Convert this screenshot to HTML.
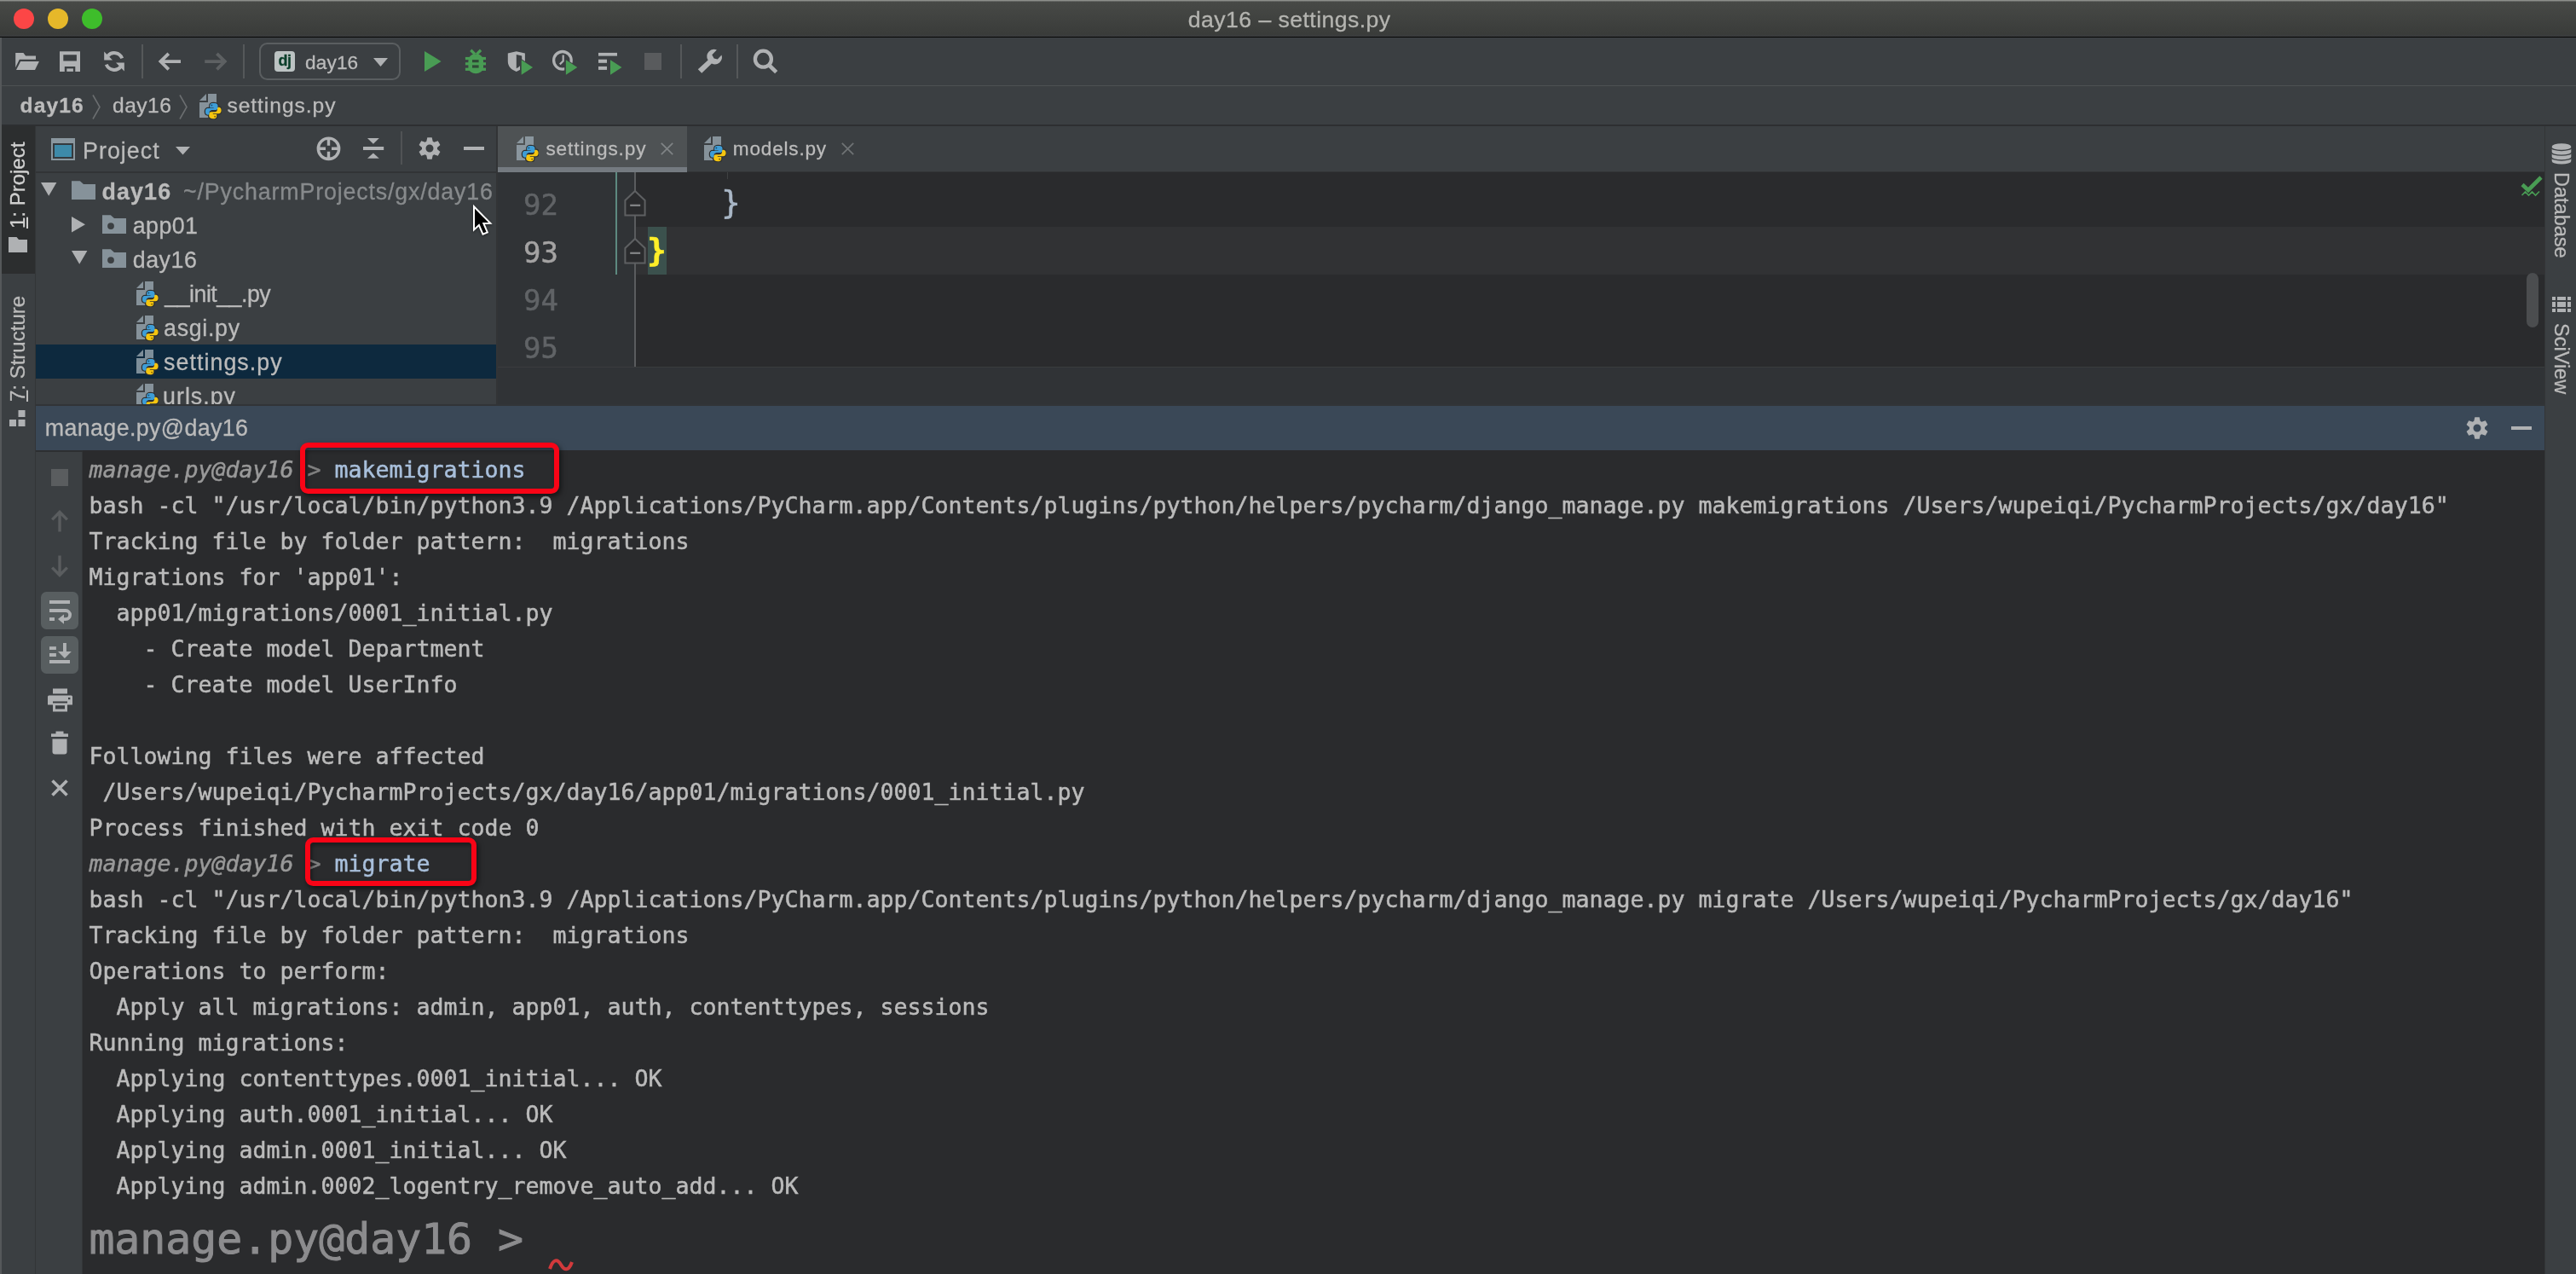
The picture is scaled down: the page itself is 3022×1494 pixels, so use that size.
<!DOCTYPE html>
<html lang="en">
<head>
<meta charset="utf-8">
<title>day16 – settings.py</title>
<style>
*{box-sizing:border-box;margin:0;padding:0}
html,body{width:3022px;height:1494px;overflow:hidden;background:#3b3f42}
body{will-change:transform;position:relative;font-family:"Liberation Sans",sans-serif;font-size:26px;color:#bbbbbb}
.a{position:absolute}
.t{position:absolute;white-space:pre;line-height:30px;height:30px;-webkit-text-stroke:.3px}
.b{font-weight:bold}
.mono{font-family:"DejaVu Sans Mono","Liberation Mono",monospace;-webkit-text-stroke:.5px}
svg{position:absolute;overflow:visible}
.i{position:absolute;width:32px;height:32px}
/* title bar */
#title{left:0;top:0;width:3022px;height:43px;background:linear-gradient(#484a47,#3a3c3a 93%,#3b3d3f)}
#titleline{left:0;top:43px;width:3022px;height:1px;background:#060606}
#tl1,#tl2,#tl3{width:24px;height:24px;border-radius:12px;top:10px}
#tl1{left:16px;background:#fc4646}
#tl2{left:56px;background:#e6b82a}
#tl3{left:96px;background:#3ebd2b}
/* toolbar & nav */
#toolbar{left:0;top:44px;width:3022px;height:56px;background:#3b3f42}
#tbline{left:0;top:100px;width:3022px;height:2px;background:#4d5153}
#nav{left:0;top:101px;width:3022px;height:45px;background:#3b3f42}
#navline{left:0;top:146px;width:3022px;height:2px;background:#2d2f31}
.vsep{position:absolute;width:2px;background:#55585a}
/* left strip */
#lstrip{left:0;top:148px;width:42px;height:1346px;background:#3b3f42}
#lactive{left:0;top:148px;width:42px;height:173px;background:#2c2e2f}
#ledge{left:0;top:44px;width:2px;height:1450px;background:#55585a}
#lborder{left:41px;top:148px;width:1px;height:1346px;background:#333537}
/* right strip */
#rstrip{left:2985px;top:148px;width:37px;height:1346px;background:#3b3f42}
#rborder{left:2985px;top:148px;width:1px;height:1346px;background:#333537}
.vtext{-webkit-text-stroke:.3px;position:absolute;white-space:pre;line-height:30px;height:30px;font-size:25px;color:#bbbbbb;transform-origin:0 0}
/* project panel */
#proj{left:42px;top:148px;width:540px;height:327px;background:#3b3f42}
#projline{left:42px;top:201px;width:540px;height:2px;background:#323436}
#projsep{left:582px;top:148px;width:2px;height:327px;background:#323436}
#sel{left:42px;top:404px;width:540px;height:40px;background:#0d293e}
#tree{left:42px;top:204px;width:540px;height:271px;overflow:hidden}
/* editor */
#tabs{left:584px;top:148px;width:2401px;height:54px;background:#3b3f42}
#tabsel{left:584px;top:148px;width:222px;height:48px;background:#4e5254}
#tabul{left:584px;top:196px;width:222px;height:6px;background:#747a80}
#tabline{left:806px;top:201px;width:2179px;height:1px;background:#323436}
#gutter{left:584px;top:202px;width:161px;height:228px;background:#303336}
#editor{left:745px;top:202px;width:2240px;height:228px;background:#2a2b2d}
#caretrow{left:745px;top:266px;width:2240px;height:56px;background:#313234}
#edbottom{left:584px;top:430px;width:2401px;height:45px;background:#303336}
#edbline{left:584px;top:430px;width:2401px;height:1px;background:#3a3c3e}
.ln{position:absolute;left:614px;font-size:33.9px;line-height:56px;height:56px;color:#606366;white-space:pre}
.code{position:absolute;font-size:33.9px;line-height:56px;height:56px;white-space:pre;color:#a9b7c6}
/* bottom panel */
#bhead{left:42px;top:476px;width:2943px;height:52px;background:#3a4857}
#btool{left:42px;top:528px;width:55px;height:966px;background:#3b3f42}
#btoolline{left:96px;top:528px;width:1px;height:966px;background:#333537}
#console{left:97px;top:528px;width:2888px;height:966px;background:#2a2b2d;overflow:hidden}
.cl{position:absolute;left:7.4px;height:42px;line-height:42px;font-size:26.58px;white-space:pre;color:#bbbbbb}
.pr{color:#999999;font-style:italic}
.gt{color:#808080}
.cmd{color:#a8bfdb}
.redbox{position:absolute;border:6.3px solid #f90416;border-radius:9.5px;box-shadow:2px 3px 6px rgba(0,0,0,.55),inset 2px 3px 5px rgba(0,0,0,.4)}
.tbtn{position:absolute;left:48px;width:44px;height:44px;border-radius:6.5px;background:#585e60}
</style>
</head>
<body>
<svg width="0" height="0" style="left:0;top:0">
<defs>
<symbol id="py" viewBox="0 0 16 16">
<path d="M7,1 L3,5 L7,5 Z" fill="#9AA7B0" fill-opacity=".8"/>
<path d="M8,1 L8,6 L3,6 L3,15 L13,15 L13,1 Z" fill="#9AA7B0" fill-opacity=".8"/>
<g transform="translate(6.3,6.2)">
<g id="pylogo">
<path id="pyb" d="M4.9,0.3 C3.2,0.3 2.9,1.0 2.9,1.9 V2.9 H5.1 V3.3 H1.8 C0.8,3.3 0.2,4.0 0.2,5.2 C0.2,6.4 0.8,7.0 1.6,7.0 H2.5 V5.8 C2.5,4.9 3.2,4.3 4.0,4.3 H6.2 C6.9,4.3 7.4,3.8 7.4,3.1 V1.9 C7.4,0.9 6.5,0.3 4.9,0.3 Z" fill="#3e9dd6" stroke="#2d3032" stroke-width="1.3" paint-order="stroke"/>
<path d="M4.9,0.3 C3.2,0.3 2.9,1.0 2.9,1.9 V2.9 H5.1 V3.3 H1.8 C0.8,3.3 0.2,4.0 0.2,5.2 C0.2,6.4 0.8,7.0 1.6,7.0 H2.5 V5.8 C2.5,4.9 3.2,4.3 4.0,4.3 H6.2 C6.9,4.3 7.4,3.8 7.4,3.1 V1.9 C7.4,0.9 6.5,0.3 4.9,0.3 Z" transform="rotate(180 4.85 4.85)" fill="#f5c50f" stroke="#2d3032" stroke-width="1.3" paint-order="stroke"/>
<path d="M4.9,0.3 C3.2,0.3 2.9,1.0 2.9,1.9 V2.9 H5.1 V3.3 H1.8 C0.8,3.3 0.2,4.0 0.2,5.2 C0.2,6.4 0.8,7.0 1.6,7.0 H2.5 V5.8 C2.5,4.9 3.2,4.3 4.0,4.3 H6.2 C6.9,4.3 7.4,3.8 7.4,3.1 V1.9 C7.4,0.9 6.5,0.3 4.9,0.3 Z" fill="#3e9dd6"/>
<circle cx="3.9" cy="1.55" r=".45" fill="#1d4f75"/>
<circle cx="5.8" cy="8.15" r=".45" fill="#7a5c00"/>
</g>
</g>
</symbol>
<symbol id="folder" viewBox="0 0 16 16">
<path d="M1,2.1 H5.9 L8,4 H15 V13 H1 Z" fill="#9AA7B0" fill-opacity=".8"/>
</symbol>
<symbol id="mfolder" viewBox="0 0 16 16">
<path d="M1,2.1 H5.9 L8,4 H15 V13 H1 Z M6,6.6 A1.95,1.95 0 1 0 6,10.5 A1.95,1.95 0 1 0 6,6.6 Z" fill="#9AA7B0" fill-opacity=".8" fill-rule="evenodd"/>
</symbol>
<symbol id="gear" viewBox="0 0 30 30"><path fill="#afb1b3" fill-rule="evenodd" d="M11.30,6.80 L12.30,2.20 L17.70,2.20 L18.70,6.80 A9.0,9.0 0 0 1 20.26,7.69 L24.74,6.26 L27.44,10.94 L23.96,14.10 A9.0,9.0 0 0 1 23.96,15.90 L27.44,19.06 L24.74,23.74 L20.26,22.31 A9.0,9.0 0 0 1 18.70,23.20 L17.70,27.80 L12.30,27.80 L11.30,23.20 A9.0,9.0 0 0 1 9.74,22.31 L5.26,23.74 L2.56,19.06 L6.04,15.90 A9.0,9.0 0 0 1 6.04,14.10 L2.56,10.94 L5.26,6.26 L9.74,7.69 A9.0,9.0 0 0 1 11.30,6.80 Z M10.50,15.00 A4.5,4.5 0 1 0 19.50,15.00 A4.5,4.5 0 1 0 10.50,15.00 Z"/></symbol>
<symbol id="play" viewBox="0 0 16 16">
<path d="M0,0 L9.8,6 L0,12 Z" fill="#499c54"/>
</symbol>
</defs>
</svg>
<!-- TITLE BAR -->
<div class="a" id="title"></div>
<div class="a" style="left:0;top:0;width:3022px;height:1px;background:#8d8f8b"></div><div class="a" style="left:0;top:1px;width:3022px;height:1px;background:#676966"></div>
<div class="a" id="titleline"></div>
<div class="a" id="tl1"></div><div class="a" id="tl2"></div><div class="a" id="tl3"></div>
<div class="t" id="titletext" style="left:1393.80px;top:7.58px;font-size:26.60px;letter-spacing:0.456px;color:#b4b4b0">day16 – settings.py</div>

<!-- TOOLBAR -->
<div class="a" id="toolbar"></div>
<div class="a" id="tbline"></div>
<div class="a" id="nav"></div>
<div class="a" id="navline"></div>
<!-- open -->
<svg class="i" style="left:16px;top:56px" viewBox="0 0 16 16"><path fill="#afb1b3" d="M1.1,3.05 H5.7 L7.05,4.8 H13 V6.85 H3.4 L1.1,11.6 Z"/><path fill="#afb1b3" d="M4.05,8.05 H14.95 L12.5,12.95 H1.5 Z"/></svg>
<!-- save -->
<svg class="i" style="left:66px;top:56px" viewBox="0 0 16 16"><path fill="#afb1b3" fill-rule="evenodd" d="M2,2.1 H14 V13.95 H2 Z M4.15,4.15 V7.7 H11.95 V4.15 Z M4.9,10.95 V13.95 H11.15 V10.95 Z"/><rect x="6.15" y="12.2" width="3.8" height="1.75" fill="#afb1b3"/></svg>
<!-- refresh -->
<svg class="i" style="left:118px;top:56px" viewBox="0 0 16 16"><g fill="none" stroke="#afb1b3" stroke-width="2"><path d="M12.6,6.2 A4.9,4.9 0 0 0 4.2,4.9"/><path d="M3.4,9.8 A4.9,4.9 0 0 0 11.8,11.1"/></g><path fill="#afb1b3" d="M2.1,2.3 V7.2 H7 Z"/><path fill="#afb1b3" d="M13.9,13.7 V8.8 H9 Z"/></svg>
<div class="vsep" style="left:166px;top:52px;height:40px"></div>
<!-- back -->
<svg class="i" style="left:182px;top:56px" viewBox="0 0 16 16"><path fill="none" stroke="#afb1b3" stroke-width="1.9" d="M15,8.05 H3.2 M7.9,3.4 L3.2,8.05 L7.9,12.7"/></svg>
<!-- forward -->
<svg class="i" style="left:236px;top:56px" viewBox="0 0 16 16"><path fill="none" stroke="#5d6062" stroke-width="1.9" d="M2.1,8.05 H13.9 M9.2,3.4 L13.9,8.05 L9.2,12.7"/></svg>
<div class="vsep" style="left:285px;top:52px;height:40px"></div>
<!-- run config -->
<div class="a" style="left:304px;top:50px;width:166px;height:44px;border:2px solid #5a5e60;border-radius:9.5px"></div>
<div class="a" style="left:322px;top:60px;width:24px;height:24px;border-radius:4px;background:#bcc3c3"></div>
<div class="t b" style="left:326.5px;top:56px;font-size:18px;color:#0b3f2b;letter-spacing:-.5px">dj</div>
<div class="t" id="rc" style="left:358.10px;top:58.77px;font-size:22.60px;letter-spacing:0.125px">day16</div>
<svg style="left:438px;top:68px" width="17" height="10" viewBox="0 0 17 10"><path d="M0,0 H17 L8.5,10 Z" fill="#afb1b3"/></svg>
<!-- run -->
<svg style="left:498px;top:60px" width="20" height="24" viewBox="0 0 20 24"><path d="M0,0 L19.6,12 L0,24 Z" fill="#499c54"/></svg>
<!-- debug -->
<svg style="left:545px;top:58px" width="26" height="29" viewBox="0 0 26 29"><g fill="#499c54"><path d="M4.4,14 C4.4,8.5 8,5.3 13.2,5.3 C18.4,5.3 22,8.5 22,14 V21 C22,25.5 17.5,28.2 13.2,28.2 C8.9,28.2 4.4,25.5 4.4,21 Z"/><rect x="0.9" y="8.9" width="24.1" height="3.2"/><rect x="0.9" y="15.2" width="24.1" height="3.2"/><rect x="0.9" y="21.6" width="24.1" height="3.3"/></g><path d="M7.3,0.8 L12.2,5.6 M19.1,0.8 L14.2,5.6" stroke="#499c54" stroke-width="3.3" fill="none"/><rect x="9" y="12.1" width="7.6" height="3.1" fill="#2f4a36"/><rect x="9" y="18.4" width="7.6" height="3.2" fill="#2f4a36"/></svg>
<!-- coverage -->
<svg style="left:595px;top:60px" width="32" height="28" viewBox="0 0 32 28"><path fill="#afb1b3" fill-rule="evenodd" d="M0.8,2.6 L10.8,0.2 L20.9,2.6 V12 C20.9,18 16.5,22 10.8,23.9 C5.2,22 0.8,18 0.8,12 Z M10.8,4 V20.2 C14.5,18.6 17.2,15.6 17.2,12 V5.5 Z"/><path d="M15,8 L31.5,19 L15,30 Z" fill="#3b3f42"/><path d="M16.7,10.3 L30.1,19 L16.7,27.7 Z" fill="#499c54"/></svg>
<!-- profile -->
<svg style="left:647px;top:58px" width="32" height="30" viewBox="0 0 32 30"><circle cx="12.9" cy="12.8" r="10.3" fill="none" stroke="#afb1b3" stroke-width="3.3"/><path d="M13.7,6.5 V13.5 L9.8,17.4" fill="none" stroke="#afb1b3" stroke-width="2.2"/><path d="M15.2,10 L31.7,21 L15.2,32 Z" fill="#3b3f42"/><path d="M16.9,12.3 L30.3,21 L16.9,29.7 Z" fill="#499c54"/></svg>
<!-- run list -->
<svg style="left:702px;top:60px" width="30" height="28" viewBox="0 0 30 28"><g fill="#afb1b3"><rect x="0" y="1.9" width="22" height="3.7"/><rect x="0" y="9.7" width="10" height="4.1"/><rect x="0" y="17.9" width="10" height="4"/></g><path d="M14,10.3 L27.5,19 L14,27.7 Z" fill="#499c54"/></svg>
<!-- stop -->
<div class="a" style="left:756px;top:62px;width:20px;height:20px;background:#595b5d"></div>
<div class="vsep" style="left:798px;top:52px;height:40px"></div>
<!-- wrench -->
<svg style="left:818px;top:56px" width="32" height="32" viewBox="0 0 32 32"><path fill="#afb1b3" d="M0.8,25.2 L12.6,14.6 A8.3,8.3 0 0 1 22.9,2.6 L17.3,8.2 L19.6,12.4 L23.8,13.6 L28.5,8.6 A8.3,8.3 0 0 1 16.9,18.6 L5.2,29.8 Z"/></svg>
<div class="vsep" style="left:864px;top:52px;height:40px"></div>
<!-- search -->
<svg style="left:882px;top:56px" width="32" height="32" viewBox="0 0 32 32"><circle cx="13.4" cy="13.2" r="9.5" fill="none" stroke="#afb1b3" stroke-width="4.3"/><path d="M19.8,20 L28.7,28.6" stroke="#afb1b3" stroke-width="4.6" fill="none"/></svg>

<!-- NAV -->
<div class="t b" id="nv1" style="left:23.60px;top:108.78px;font-size:24.60px;letter-spacing:1.075px">day16</div>
<svg style="left:108px;top:111px" width="10" height="29" viewBox="0 0 10 29"><path d="M1,0.5 L9,14.5 L1,28.5" fill="none" stroke="#6b6e70" stroke-width="1.6"/></svg>
<div class="t" id="nv2" style="left:132.10px;top:108.78px;font-size:24.60px;letter-spacing:0.450px">day16</div>
<svg style="left:210px;top:111px" width="10" height="29" viewBox="0 0 10 29"><path d="M1,0.5 L9,14.5 L1,28.5" fill="none" stroke="#6b6e70" stroke-width="1.6"/></svg>
<svg class="i" style="left:228px;top:108px"><use href="#py"/></svg>
<div class="t" id="nv3" style="left:266.40px;top:108.78px;font-size:24.60px;letter-spacing:0.960px">settings.py</div>
<!-- LEFT STRIP -->
<div class="a" id="lstrip"></div>
<div class="a" id="lactive"></div>
<div class="a" id="lborder"></div>
<div class="vtext" id="vt1" style="left:6px;top:268px;font-size:24px;transform:rotate(-90deg);color:#d0d0d0"><u>1</u>: Project</div>
<svg style="left:10px;top:278px" width="22" height="18" viewBox="0 0 22 18"><path d="M0,0 H9.5 L12,3 H22 V18 H0 Z" fill="#afb1b3"/></svg>
<div class="vtext" id="vt2" style="left:6px;top:471px;font-size:24px;transform:rotate(-90deg)"><u>7</u>: Structure</div>
<svg style="left:11px;top:481px" width="20" height="20" viewBox="0 0 20 20"><g fill="#afb1b3"><rect x="10.5" y="0" width="8" height="8"/><rect x="0" y="11" width="8" height="8"/><rect x="10.5" y="11" width="8" height="8"/></g></svg>

<!-- RIGHT STRIP -->
<div class="a" id="rstrip"></div>
<div class="a" id="rborder"></div>
<svg style="left:2993px;top:168px" width="24" height="25" viewBox="0 0 24 25"><path d="M0.7,3.9 V21 A11.3,3.6 0 0 0 23.3,21 V3.9 A11.3,3.6 0 0 0 0.7,3.9 Z" fill="#afb1b3"/><g fill="none" stroke="#3b3f42" stroke-width="1.4"><path d="M0,4.7 A11.8,3.7 0 0 0 24,4.7"/><path d="M0,10.4 A11.8,3.7 0 0 0 24,10.4"/><path d="M0,16.2 A11.8,3.7 0 0 0 24,16.2"/></g></svg>
<div class="vtext" id="vt3" style="left:3020px;top:202px;font-size:23.5px;transform:rotate(90deg)">Database</div>
<svg style="left:2994px;top:348px" width="22" height="18" viewBox="0 0 22 18"><g fill="#afb1b3"><rect x="0" y="0" width="4" height="4"/><rect x="6" y="0" width="10" height="4"/><rect x="18" y="0" width="4" height="4"/><rect x="0" y="6" width="4" height="6"/><rect x="6" y="6" width="10" height="6"/><rect x="18" y="6" width="4" height="6"/><rect x="0" y="14" width="4" height="4"/><rect x="6" y="14" width="10" height="4"/><rect x="18" y="14" width="4" height="4"/></g></svg>
<div class="vtext" id="vt4" style="left:3020px;top:379px;font-size:23.5px;transform:rotate(90deg)">SciView</div>

<!-- PROJECT PANEL -->
<div class="a" id="proj"></div>
<div class="a" id="sel"></div>
<div class="a" id="projline"></div>
<div class="a" id="projsep"></div>
<!-- header -->
<svg style="left:60px;top:162px" width="28" height="26" viewBox="0 0 28 26"><rect width="28" height="26" fill="#8a979f"/><rect x="2" y="6" width="24" height="18" fill="#343a3e"/><rect x="4" y="8" width="20" height="14" fill="#3d8aa9"/></svg>
<div class="t" id="ph" style="left:97.10px;top:161.51px;font-size:26.80px;letter-spacing:1.017px">Project</div>
<svg style="left:206px;top:172px" width="17" height="10" viewBox="0 0 17 10"><path d="M0,0 H17 L8.5,9.6 Z" fill="#afb1b3"/></svg>
<svg style="left:371px;top:160px" width="29" height="29" viewBox="0 0 29 29"><circle cx="14.5" cy="14.3" r="12.2" fill="none" stroke="#afb1b3" stroke-width="3.4"/><path d="M14.5,2 V10.8 M14.5,17.8 V26.8 M2,14.3 H11 M18,14.3 H27" stroke="#afb1b3" stroke-width="3.4" fill="none"/></svg>
<svg style="left:426px;top:161px" width="25" height="26" viewBox="0 0 25 26"><g fill="#afb1b3"><rect x="0" y="11" width="24.2" height="4"/><path d="M5,1 H18.8 L11.9,7.8 Z"/><path d="M5,24.7 H18.8 L11.9,18.5 Z"/></g></svg>
<div class="vsep" style="left:470px;top:154px;height:39px;background:#505355"></div>
<svg style="left:489px;top:159px" width="30" height="30"><use href="#gear"/></svg>
<div class="a" style="left:544px;top:172px;width:24px;height:4px;background:#afb1b3"></div>
<!-- tree -->
<div class="a" id="tree">
<svg style="left:6px;top:10px" width="19" height="16" viewBox="0 0 19 16"><path d="M0,0 H18.4 L9.2,15.8 Z" fill="#afb1b3"/></svg>
<svg class="i" style="left:40px;top:4px"><use href="#folder"/></svg>
<div class="t b" id="tr0" style="left:77.50px;top:5.71px;font-size:26.80px;letter-spacing:1.150px">day16</div>
<div class="t" id="tr0b" style="left:173.00px;top:5.71px;font-size:26.80px;letter-spacing:0.848px;color:#878a8c">~/PycharmProjects/gx/day16</div>

<svg style="left:42px;top:50px" width="16" height="19" viewBox="0 0 16 19"><path d="M0,0 L16,9.2 L0,18.4 Z" fill="#afb1b3"/></svg>
<svg class="i" style="left:76px;top:44px"><use href="#mfolder"/></svg>
<div class="t" id="tr1" style="left:113.80px;top:45.71px;font-size:26.80px;letter-spacing:0.400px">app01</div>

<svg style="left:42px;top:90px" width="19" height="16" viewBox="0 0 19 16"><path d="M0,0 H18.4 L9.2,15.8 Z" fill="#afb1b3"/></svg>
<svg class="i" style="left:76px;top:84px"><use href="#mfolder"/></svg>
<div class="t" id="tr2" style="left:113.80px;top:85.71px;font-size:26.80px;letter-spacing:0.500px">day16</div>

<svg class="i" style="left:112px;top:124px"><use href="#py"/></svg>
<div class="t" id="tr3" style="left:151.30px;top:125.71px;font-size:26.80px;letter-spacing:-0.520px">__init__.py</div>
<svg class="i" style="left:112px;top:164px"><use href="#py"/></svg>
<div class="t" id="tr4" style="left:150.10px;top:165.71px;font-size:26.80px;letter-spacing:0.683px">asgi.py</div>
<svg class="i" style="left:112px;top:204px"><use href="#py"/></svg>
<div class="t" id="tr5" style="left:150.10px;top:205.71px;font-size:26.80px;letter-spacing:1.040px">settings.py</div>
<svg class="i" style="left:112px;top:244px"><use href="#py"/></svg>
<div class="t" id="tr6" style="left:149.10px;top:245.71px;font-size:26.80px;letter-spacing:0.983px">urls.py</div>
</div>
<!-- EDITOR -->
<div class="a" id="tabs"></div>
<div class="a" id="tabsel"></div>
<div class="a" id="tabul"></div>
<div class="a" id="tabline"></div>
<svg class="i" style="left:600px;top:158px"><use href="#py"/></svg>
<div class="t" id="tb1" style="left:640.40px;top:160.17px;font-size:22.60px;letter-spacing:0.920px">settings.py</div>
<svg style="left:775px;top:167px" width="15" height="15" viewBox="0 0 15 15"><path d="M0.8,0.8 L14.2,14.2 M14.2,0.8 L0.8,14.2" stroke="#7f8385" stroke-width="1.8" fill="none"/></svg>
<svg class="i" style="left:820px;top:158px"><use href="#py"/></svg>
<div class="t" id="tb2" style="left:859.80px;top:160.17px;font-size:22.60px;letter-spacing:0.800px">models.py</div>
<svg style="left:987px;top:167px" width="15" height="15" viewBox="0 0 15 15"><path d="M0.8,0.8 L14.2,14.2 M14.2,0.8 L0.8,14.2" stroke="#6e7274" stroke-width="1.8" fill="none"/></svg>

<div class="a" id="gutter"></div>
<div class="a" id="editor"></div>
<div class="a" id="caretrow"></div>
<div class="a" style="left:853px;top:202px;width:1px;height:8px;background:#3f4142"></div>
<div class="a" style="left:722px;top:202px;width:2px;height:120px;background:#5d8a80"></div>
<div class="a" style="left:744px;top:202px;width:2px;height:228px;background:#5a5c5e"></div>
<div class="ln mono" id="ln92" style="top:212.5px">92</div>
<div class="ln mono" id="ln93" style="top:268.5px;color:#a4a3a3">93</div>
<div class="ln mono" id="ln94" style="top:324.5px">94</div>
<div class="a" style="left:584px;top:378px;width:161px;height:52px;overflow:hidden"><div class="ln mono" id="ln95" style="left:30px;top:2.5px">95</div></div>
<svg style="left:732px;top:222px" width="26" height="32" viewBox="0 0 26 32"><path d="M13,2 L24.6,13 V30.6 H1.4 V13 Z" fill="#2a2b2d" stroke="#5e6062" stroke-width="2"/><path d="M7.2,18.8 H19.2" stroke="#858789" stroke-width="2.2"/></svg>
<svg style="left:732px;top:278px" width="26" height="32" viewBox="0 0 26 32"><path d="M13,2 L24.6,13 V30.6 H1.4 V13 Z" fill="#2a2b2d" stroke="#5e6062" stroke-width="2"/><path d="M7.2,18.8 H19.2" stroke="#858789" stroke-width="2.2"/></svg>
<div class="a" style="left:760px;top:266px;width:22px;height:56px;background:#3b514d"></div>
<div class="code mono" id="br92" style="left:846px;top:209px;font-size:38px">}</div>
<div class="code mono b" id="br93" style="left:759px;top:265px;font-size:38px;color:#ffef28">}</div>
<div class="a" id="edbottom"></div>
<div class="a" id="edbline"></div>
<!-- inspection ok -->
<svg style="left:2957px;top:205px" width="26" height="26" viewBox="0 0 26 26"><path d="M2,11.5 L9,18 L24,3" fill="none" stroke="#499c54" stroke-width="4.6"/><path d="M1.5,24 L5.5,20 L9.5,24 L13.5,20 L17.5,24 L22,19.5" fill="none" stroke="#499c54" stroke-width="1.7"/></svg>
<!-- scrollbar -->
<div class="a" style="left:2964px;top:320px;width:14px;height:64px;border-radius:7px;background:#4b4d4f"></div>
<!-- BOTTOM PANEL -->
<div class="a" style="left:42px;top:474px;width:2943px;height:2px;background:#313437"></div>
<div class="a" id="bhead"></div>
<div class="t" id="bh" style="left:52.80px;top:487.01px;font-size:26.80px;letter-spacing:0.386px">manage.py@day16</div>
<svg style="left:2891px;top:487px" width="30" height="30"><use href="#gear"/></svg>
<div class="a" style="left:2946px;top:500px;width:24px;height:4px;background:#afb1b3"></div>
<div class="a" id="btool"></div>
<div class="a" id="btoolline"></div>
<div class="a" style="left:42px;top:528px;width:55px;height:2px;background:#2d2f31"></div>
<div class="a" style="left:60px;top:550px;width:20px;height:20px;background:#5a5d5f"></div>
<svg style="left:60px;top:598px" width="20" height="26" viewBox="0 0 20 26"><path d="M10,25.5 V2.5 M1.2,11.4 L10,2.5 L18.8,11.4" fill="none" stroke="#5a5d5f" stroke-width="3.4"/></svg>
<svg style="left:60px;top:651px" width="20" height="26" viewBox="0 0 20 26"><path d="M10,0.5 V23.5 M1.2,14.6 L10,23.5 L18.8,14.6" fill="none" stroke="#5a5d5f" stroke-width="3.4"/></svg>
<div class="tbtn" style="top:694px"></div>
<svg style="left:54px;top:700px" width="32" height="32" viewBox="0 0 32 32"><g fill="#afb1b3"><rect x="4" y="4" width="24" height="4"/><rect x="4" y="24.1" width="6" height="3.9"/><path d="M14,26.1 L21,20.4 V31.8 Z"/></g><path d="M4,16 H23 A5.1,5.1 0 0 1 23,26.2 H20" fill="none" stroke="#afb1b3" stroke-width="3.8"/></svg>
<div class="tbtn" style="top:746px"></div>
<svg style="left:54px;top:752px" width="32" height="32" viewBox="0 0 32 32"><g fill="#afb1b3"><rect x="4" y="6.2" width="7.9" height="3.8"/><rect x="4" y="14" width="7.9" height="4"/><rect x="4" y="22" width="24" height="4"/><rect x="20" y="2" width="3.9" height="11"/><path d="M14,11.9 H29.8 L21.9,20.1 Z"/></g></svg>
<svg style="left:55px;top:807px" width="31" height="28" viewBox="0 0 31 28"><g fill="#afb1b3"><rect x="7" y="0.5" width="17" height="6"/><path fill-rule="evenodd" d="M1,10 Q1,8.5 2.5,8.5 H28.5 Q30,8.5 30,10 V19.5 H24 V15.5 H7 V19.5 H1 Z M25,11 V13.3 H27.4 V11 Z"/><path fill-rule="evenodd" d="M7,17.5 H24 V27.5 H7 Z M10,20.3 V24.6 H21 V20.3 Z"/></g></svg>
<svg style="left:58px;top:857px" width="24" height="28" viewBox="0 0 24 28"><g fill="#afb1b3"><rect x="2" y="3.4" width="20" height="3.6"/><rect x="7.5" y="0.6" width="9" height="3.6"/><path d="M3.5,9.5 H20.5 V24.5 Q20.5,27.5 17.5,27.5 H6.5 Q3.5,27.5 3.5,24.5 Z"/></g></svg>
<svg style="left:60px;top:914px" width="20" height="20" viewBox="0 0 20 20"><path d="M1.5,1.5 L18.5,18.5 M18.5,1.5 L1.5,18.5" fill="none" stroke="#afb1b3" stroke-width="3.6"/></svg>
<div class="a" id="console">
<div class="cl mono" style="top:2px"><span class="pr">manage.py@day16</span> <span class="gt">&gt;</span> <span class="cmd">makemigrations</span></div>
<div class="cl mono" style="top:44px">bash -cl "/usr/local/bin/python3.9 /Applications/PyCharm.app/Contents/plugins/python/helpers/pycharm/django_manage.py makemigrations /Users/wupeiqi/PycharmProjects/gx/day16"</div>
<div class="cl mono" style="top:86px">Tracking file by folder pattern:  migrations</div>
<div class="cl mono" style="top:128px">Migrations for 'app01':</div>
<div class="cl mono" style="top:170px">  app01/migrations/0001_initial.py</div>
<div class="cl mono" style="top:212px">    - Create model Department</div>
<div class="cl mono" style="top:254px">    - Create model UserInfo</div>
<div class="cl mono" style="top:338px">Following files were affected </div>
<div class="cl mono" style="top:380px"> /Users/wupeiqi/PycharmProjects/gx/day16/app01/migrations/0001_initial.py</div>
<div class="cl mono" style="top:422px">Process finished with exit code 0</div>
<div class="cl mono" style="top:464px"><span class="pr">manage.py@day16</span> <span class="gt">&gt;</span> <span class="cmd">migrate</span></div>
<div class="cl mono" style="top:506px">bash -cl "/usr/local/bin/python3.9 /Applications/PyCharm.app/Contents/plugins/python/helpers/pycharm/django_manage.py migrate /Users/wupeiqi/PycharmProjects/gx/day16"</div>
<div class="cl mono" style="top:548px">Tracking file by folder pattern:  migrations</div>
<div class="cl mono" style="top:590px">Operations to perform:</div>
<div class="cl mono" style="top:632px">  Apply all migrations: admin, app01, auth, contenttypes, sessions</div>
<div class="cl mono" style="top:674px">Running migrations:</div>
<div class="cl mono" style="top:716px">  Applying contenttypes.0001_initial... OK</div>
<div class="cl mono" style="top:758px">  Applying auth.0001_initial... OK</div>
<div class="cl mono" style="top:800px">  Applying admin.0001_initial... OK</div>
<div class="cl mono" style="top:842px">  Applying admin.0002_logentry_remove_auto_add... OK</div>
<div class="cl mono" id="prompt" style="top:890px;height:70px;line-height:70px;font-size:49.8px;-webkit-text-stroke:1px;color:#8c8c8e">manage.py@day16 &gt;</div>
<svg style="left:547px;top:945.5px" width="28" height="20" viewBox="0 0 28 20"><path d="M1,14 C5,2 10,2 14,9 S23,17 27,6" fill="none" stroke="#d23a3c" stroke-width="4"/></svg>
</div>
<div class="redbox" style="left:352px;top:519px;width:304px;height:60.4px"></div>
<div class="redbox" style="left:357.7px;top:982.2px;width:201.3px;height:57.2px"></div>
<div class="a" id="ledge"></div>
<!-- cursor -->
<svg style="left:553px;top:238px;filter:drop-shadow(0 1px 1.5px rgba(0,0,0,.45))" width="28" height="42" viewBox="0 0 28 42"><path d="M3,4.2 V31.4 L8.9,26 L13.5,36.7 L18.8,34.4 L14.3,24 L22.3,23.9 Z" fill="#000" stroke="#fff" stroke-width="2" stroke-linejoin="miter"/></svg>
</body>
</html>
